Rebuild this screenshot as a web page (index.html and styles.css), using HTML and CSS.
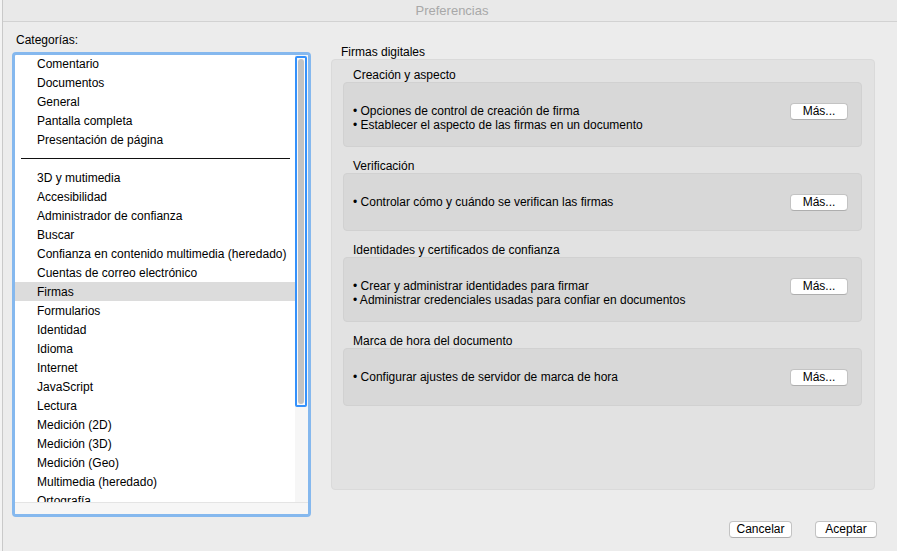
FILE: index.html
```html
<!DOCTYPE html>
<html lang="es">
<head>
<meta charset="utf-8">
<title>Preferencias</title>
<link rel="stylesheet" href="styles.css">
</head>
<body>
<div class="desk">
  <div class="behind"></div>
  <div class="window">
    <div class="titlebar">Preferencias</div>
    <div class="content">
      <div class="left">
        <div class="cat-label">Categorías:</div>
        <div class="listring">
          <div class="listbox">
            <div class="listarea">
              <ul class="items">
                <li>Comentario</li>
                <li>Documentos</li>
                <li>General</li>
                <li>Pantalla completa</li>
                <li>Presentación de página</li>
                <li class="sep"><span></span></li>
                <li>3D y mutimedia</li>
                <li>Accesibilidad</li>
                <li>Administrador de confianza</li>
                <li>Buscar</li>
                <li>Confianza en contenido multimedia (heredado)</li>
                <li>Cuentas de correo electrónico</li>
                <li class="selected">Firmas</li>
                <li>Formularios</li>
                <li>Identidad</li>
                <li>Idioma</li>
                <li>Internet</li>
                <li>JavaScript</li>
                <li>Lectura</li>
                <li>Medición (2D)</li>
                <li>Medición (3D)</li>
                <li>Medición (Geo)</li>
                <li>Multimedia (heredado)</li>
                <li>Ortografía</li>
              </ul>
              <div class="vscroll"><div class="thumb"><div class="pill"></div></div></div>
            </div>
            <div class="hstrip"></div>
          </div>
        </div>
      </div>
      <div class="right">
        <div class="group-label">Firmas digitales</div>
        <div class="panel">
          <div class="sec-label">Creación y aspecto</div>
          <div class="box tall">
            <div class="lines">
              <div>• Opciones de control de creación de firma</div>
              <div>• Establecer el aspecto de las firmas en un documento</div>
            </div>
            <button class="btn more">Más...</button>
          </div>
          <div class="sec-label">Verificación</div>
          <div class="box">
            <div class="lines">
              <div>• Controlar cómo y cuándo se verifican las firmas</div>
            </div>
            <button class="btn more">Más...</button>
          </div>
          <div class="sec-label">Identidades y certificados de confianza</div>
          <div class="box tall">
            <div class="lines">
              <div>• Crear y administrar identidades para firmar</div>
              <div>• Administrar credenciales usadas para confiar en documentos</div>
            </div>
            <button class="btn more">Más...</button>
          </div>
          <div class="sec-label">Marca de hora del documento</div>
          <div class="box">
            <div class="lines">
              <div>• Configurar ajustes de servidor de marca de hora</div>
            </div>
            <button class="btn more">Más...</button>
          </div>
        </div>
        <div class="footer">
          <button class="btn cancel">Cancelar</button>
          <button class="btn ok">Aceptar</button>
        </div>
      </div>
    </div>
  </div>
</div>
</body>
</html>
```

FILE: styles.css
```css
* { box-sizing: border-box; }
html, body {
  margin: 0;
  padding: 0;
  width: 897px;
  height: 551px;
  overflow: hidden;
  background: #ececec;
  font-family: "Liberation Sans", Arial, sans-serif;
  font-size: 12px;
  color: #000;
}
.desk {
  display: flex;
  height: 551px;
}
.behind {
  width: 3px;
  flex: none;
  background: #f3f3f3;
  border-right: 1px solid #c9c9c9;
}
.window {
  flex: 1;
  display: flex;
  flex-direction: column;
  background: #ececec;
}
.titlebar {
  height: 22px;
  flex: none;
  background: #e9e9e9;
  border-bottom: 1px solid #d2d2d2;
  color: #a8a8a8;
  font-size: 13px;
  line-height: 21px;
  text-align: center;
  padding-left: 4px;
}
.content {
  display: flex;
  padding: 11px 0 0 9px;
  gap: 20px;
}
.left {
  width: 299px;
  flex: none;
  display: flex;
  flex-direction: column;
}
.cat-label {
  height: 14px;
  line-height: 15px;
  margin: 0 0 5px 4px;
}
.listring {
  height: 465px;
  border: 3px solid #85b8ee;
  border-radius: 4px;
  background: #fff;
  overflow: hidden;
}
.listbox {
  height: 100%;
  display: flex;
  flex-direction: column;
}
.listarea {
  height: 447px;
  display: flex;
  overflow: hidden;
}
.items {
  list-style: none;
  margin: -1px 0 0 0;
  padding: 0;
  flex: 1;
  overflow: hidden;
}
.items li {
  height: 19px;
  line-height: 21px;
  padding-left: 22px;
  white-space: nowrap;
  overflow: hidden;
}
.items li.selected {
  background: #dcdcdc;
}
.items li.sep {
  display: flex;
  align-items: center;
  padding: 0 5px 0 6px;
}
.items li.sep span {
  display: block;
  height: 1px;
  width: 100%;
  background: #111;
}
.vscroll {
  width: 13px;
  flex: none;
  background: #f6f6f6;
  padding-top: 1px;
}
.thumb {
  height: 351px;
  width: 12px;
  border: 2px solid #3491fb;
  border-radius: 2px;
  background: #fafafa;
  padding: 1px;
}
.pill {
  height: 100%;
  background: #c2c2c2;
  border-radius: 3px;
}
.hstrip {
  flex: 1;
  background: #f6f6f6;
  border-top: 1px solid #e4e4e4;
}
.right {
  width: 544px;
  flex: none;
  display: flex;
  flex-direction: column;
}
.group-label {
  height: 14px;
  line-height: 16px;
  margin: 11px 0 1px 10px;
}
.panel {
  height: 431px;
  background: #e2e2e2;
  border: 1px solid #dadada;
  border-radius: 4px;
  padding: 8px 12px 0 11px;
  display: flex;
  flex-direction: column;
}
.sec-label {
  height: 14px;
  line-height: 14px;
  padding-left: 10px;
}
.sec-label + .box { margin-bottom: 12px; }
.box {
  height: 58px;
  background: #d8d8d8;
  border: 1px solid #d1d1d1;
  border-radius: 4px;
  padding: 20px 13px 0 9px;
  display: flex;
  justify-content: space-between;
  align-items: flex-start;
}
.box.tall { height: 65px; }
.lines { padding-top: 1px; }
.lines div {
  height: 14px;
  line-height: 14px;
  white-space: nowrap;
}
.btn {
  font-family: "Liberation Sans", Arial, sans-serif;
  font-size: 12px;
  color: #000;
  background: #fff;
  border: 1px solid #c3c3c3;
  border-bottom-color: #aeaeae;
  border-radius: 4px;
  height: 17px;
  padding: 0;
  line-height: 15px;
  text-align: center;
}
.more {
  width: 58px;
  margin-top: 0;
}
.footer {
  display: flex;
  justify-content: flex-end;
  gap: 23px;
  margin: 31px -2px 0 0;
}
.cancel { width: 63px; }
.ok { width: 62px; }
```
